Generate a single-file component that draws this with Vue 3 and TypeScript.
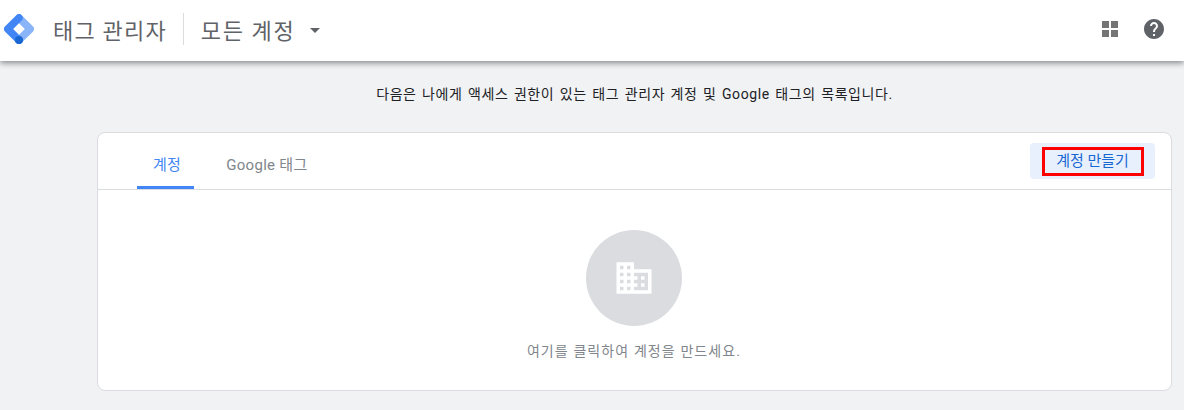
<script setup lang="ts">
import { ref } from 'vue';

const tabs = ['계정', 'Google 태그'];
const activeTab = ref(0);
</script>

<template>
  <div class="page">
    <header class="topbar">
      <svg class="logo" viewBox="0 0 30 30" width="30" height="30">
        <path d="M15 3.800L26.200 15 15 26.200" fill="none" stroke="#8ab4f8" stroke-width="7.500" stroke-linecap="round" stroke-linejoin="round" />
        <path d="M15 3.800L3.800 15 15 26.200" fill="none" stroke="#4285f4" stroke-width="7.500" stroke-linecap="round" stroke-linejoin="round" />
        <circle cx="15" cy="26" r="4" fill="#1967d2" />
      </svg>
      <span class="product">태그 관리자</span>
      <span class="divider"></span>
      <span class="account">모든 계정</span>
      <span class="caret"></span>
      <span class="spacer"></span>
      <div class="apps">
        <i></i><i></i><i></i><i></i>
      </div>
      <svg class="help" viewBox="0 0 24 24" width="24" height="24">
        <path d="M12 2C6.480 2 2 6.480 2 12s4.480 10 10 10 10-4.480 10-10S17.520 2 12 2zm1 17h-2v-2h2v2zm2.070-7.750l-.9.920C13.450 12.900 13 13.500 13 15h-2v-.5c0-1.100.45-2.100 1.170-2.830l1.240-1.260c.37-.36.590-.86.590-1.410 0-1.100-.9-2-2-2s-2 .9-2 2H8c0-2.210 1.790-4 4-4s4 1.790 4 4c0 .88-.36 1.680-.93 2.250z" fill="#5f6368" />
      </svg>
    </header>

    <main class="content">
      <p class="intro">다음은 나에게 액세스 권한이 있는 태그 관리자 계정 및 Google 태그의 목록입니다.</p>
      <section class="card">
        <div class="card-head">
          <nav class="tabs">
            <button
              v-for="(tab, i) in tabs"
              :key="tab"
              class="tab"
              :class="{ active: i === activeTab }"
              @click="activeTab = i"
            >
              {{ tab }}
            </button>
          </nav>
          <button class="create-wrap">
            <span class="create">계정 만들기</span>
          </button>
        </div>
        <div class="empty">
          <div class="circle">
            <svg viewBox="0 0 24 24" width="42" height="42">
              <path fill="#fff" d="M12 7V3H2v18h20V7H12zM6 19H4v-2h2v2zm0-4H4v-2h2v2zm0-4H4V9h2v2zm0-4H4V5h2v2zm4 12H8v-2h2v2zm0-4H8v-2h2v2zm0-4H8V9h2v2zm0-4H8V5h2v2zm10 12h-8v-2h2v-2h-2v-2h2v-2h-2V9h8v10zm-2-8h-2v2h2v-2zm0 4h-2v2h2v-2z" />
            </svg>
          </div>
          <p class="empty-text">여기를 클릭하여 계정을 만드세요.</p>
        </div>
      </section>
    </main>
  </div>
</template>

<style>
html,
body {
  margin: 0;
  background: #f1f2f4;
}
</style>

<style scoped>
.page {
  height: 410px;
  overflow: hidden;
  background: #f1f2f4;
  font-family: Roboto, "Noto Sans CJK KR", sans-serif;
}

.topbar {
  height: 61px;
  box-sizing: border-box;
  display: flex;
  align-items: center;
  padding: 0 18px 3px 4px;
  background: #fff;
  box-shadow: 0 2px 6px rgba(0, 0, 0, 0.45);
  position: relative;
}

.logo {
  flex: none;
}

.product {
  margin-left: 19px;
  font-size: 22px;
  letter-spacing: 1.200px;
  color: #5f6368;
}

.divider {
  width: 1px;
  height: 32px;
  margin: 0 17px 0 16px;
  background: #dadce0;
}

.account {
  font-size: 22px;
  letter-spacing: 1.600px;
  color: #5f6368;
}

.caret {
  width: 0;
  height: 0;
  margin: 2px 0 0 15px;
  border-left: 5px solid transparent;
  border-right: 5px solid transparent;
  border-top: 5px solid #5f6368;
}

.spacer {
  flex: 1;
}

.apps {
  display: grid;
  grid-template-columns: 7px 7px;
  gap: 2px;
  margin-right: 24px;
}

.apps i {
  width: 7px;
  height: 7px;
  background: #757575;
}

.content {
  padding: 0 12px 0 97px;
}

.intro {
  margin: 0;
  height: 71px;
  line-height: 67px;
  text-align: center;
  font-size: 14px;
  letter-spacing: 0.600px;
  word-spacing: 1.400px;
  color: #202124;
}

.card {
  height: 259px;
  box-sizing: border-box;
  background: #fff;
  border: 1px solid #dadce0;
  border-radius: 8px;
}

.card-head {
  height: 56px;
  display: flex;
  justify-content: space-between;
  border-bottom: 1px solid #dadce0;
}

.tabs {
  display: flex;
  padding-left: 39px;
  gap: 16px;
}

.tab {
  height: 56px;
  box-sizing: border-box;
  padding: 8px 13px 0 16px;
  border: 0;
  border-bottom: 3px solid transparent;
  border-radius: 0;
  background: none;
  font: 400 15px Roboto, "Noto Sans CJK KR", sans-serif;
  letter-spacing: 0.300px;
  color: #80868b;
}

.tab.active {
  color: #4285f4;
  border-bottom-color: #4285f4;
}

.create-wrap {
  width: 125px;
  height: 36px;
  margin: 10px 16px 0 0;
  padding: 0;
  display: flex;
  align-items: center;
  justify-content: center;
  border: 0;
  border-radius: 4px;
  background: #e8f0fe;
}

.create {
  width: 102px;
  height: 29px;
  box-sizing: border-box;
  border: 3px solid #f00;
  font: 400 15px/22px Roboto, "Noto Sans CJK KR", sans-serif;
  color: #1967d2;
  text-align: center;
}

.empty {
  display: flex;
  flex-direction: column;
  align-items: center;
  padding: 40px 1px 0 0;
}

.circle {
  width: 96px;
  height: 96px;
  display: flex;
  align-items: center;
  justify-content: center;
  border-radius: 50%;
  background: #dadce0;
}

.empty-text {
  margin: 15px 0 0;
  font-size: 14px;
  line-height: 20px;
  letter-spacing: 1.100px;
  color: #80868b;
}
</style>
